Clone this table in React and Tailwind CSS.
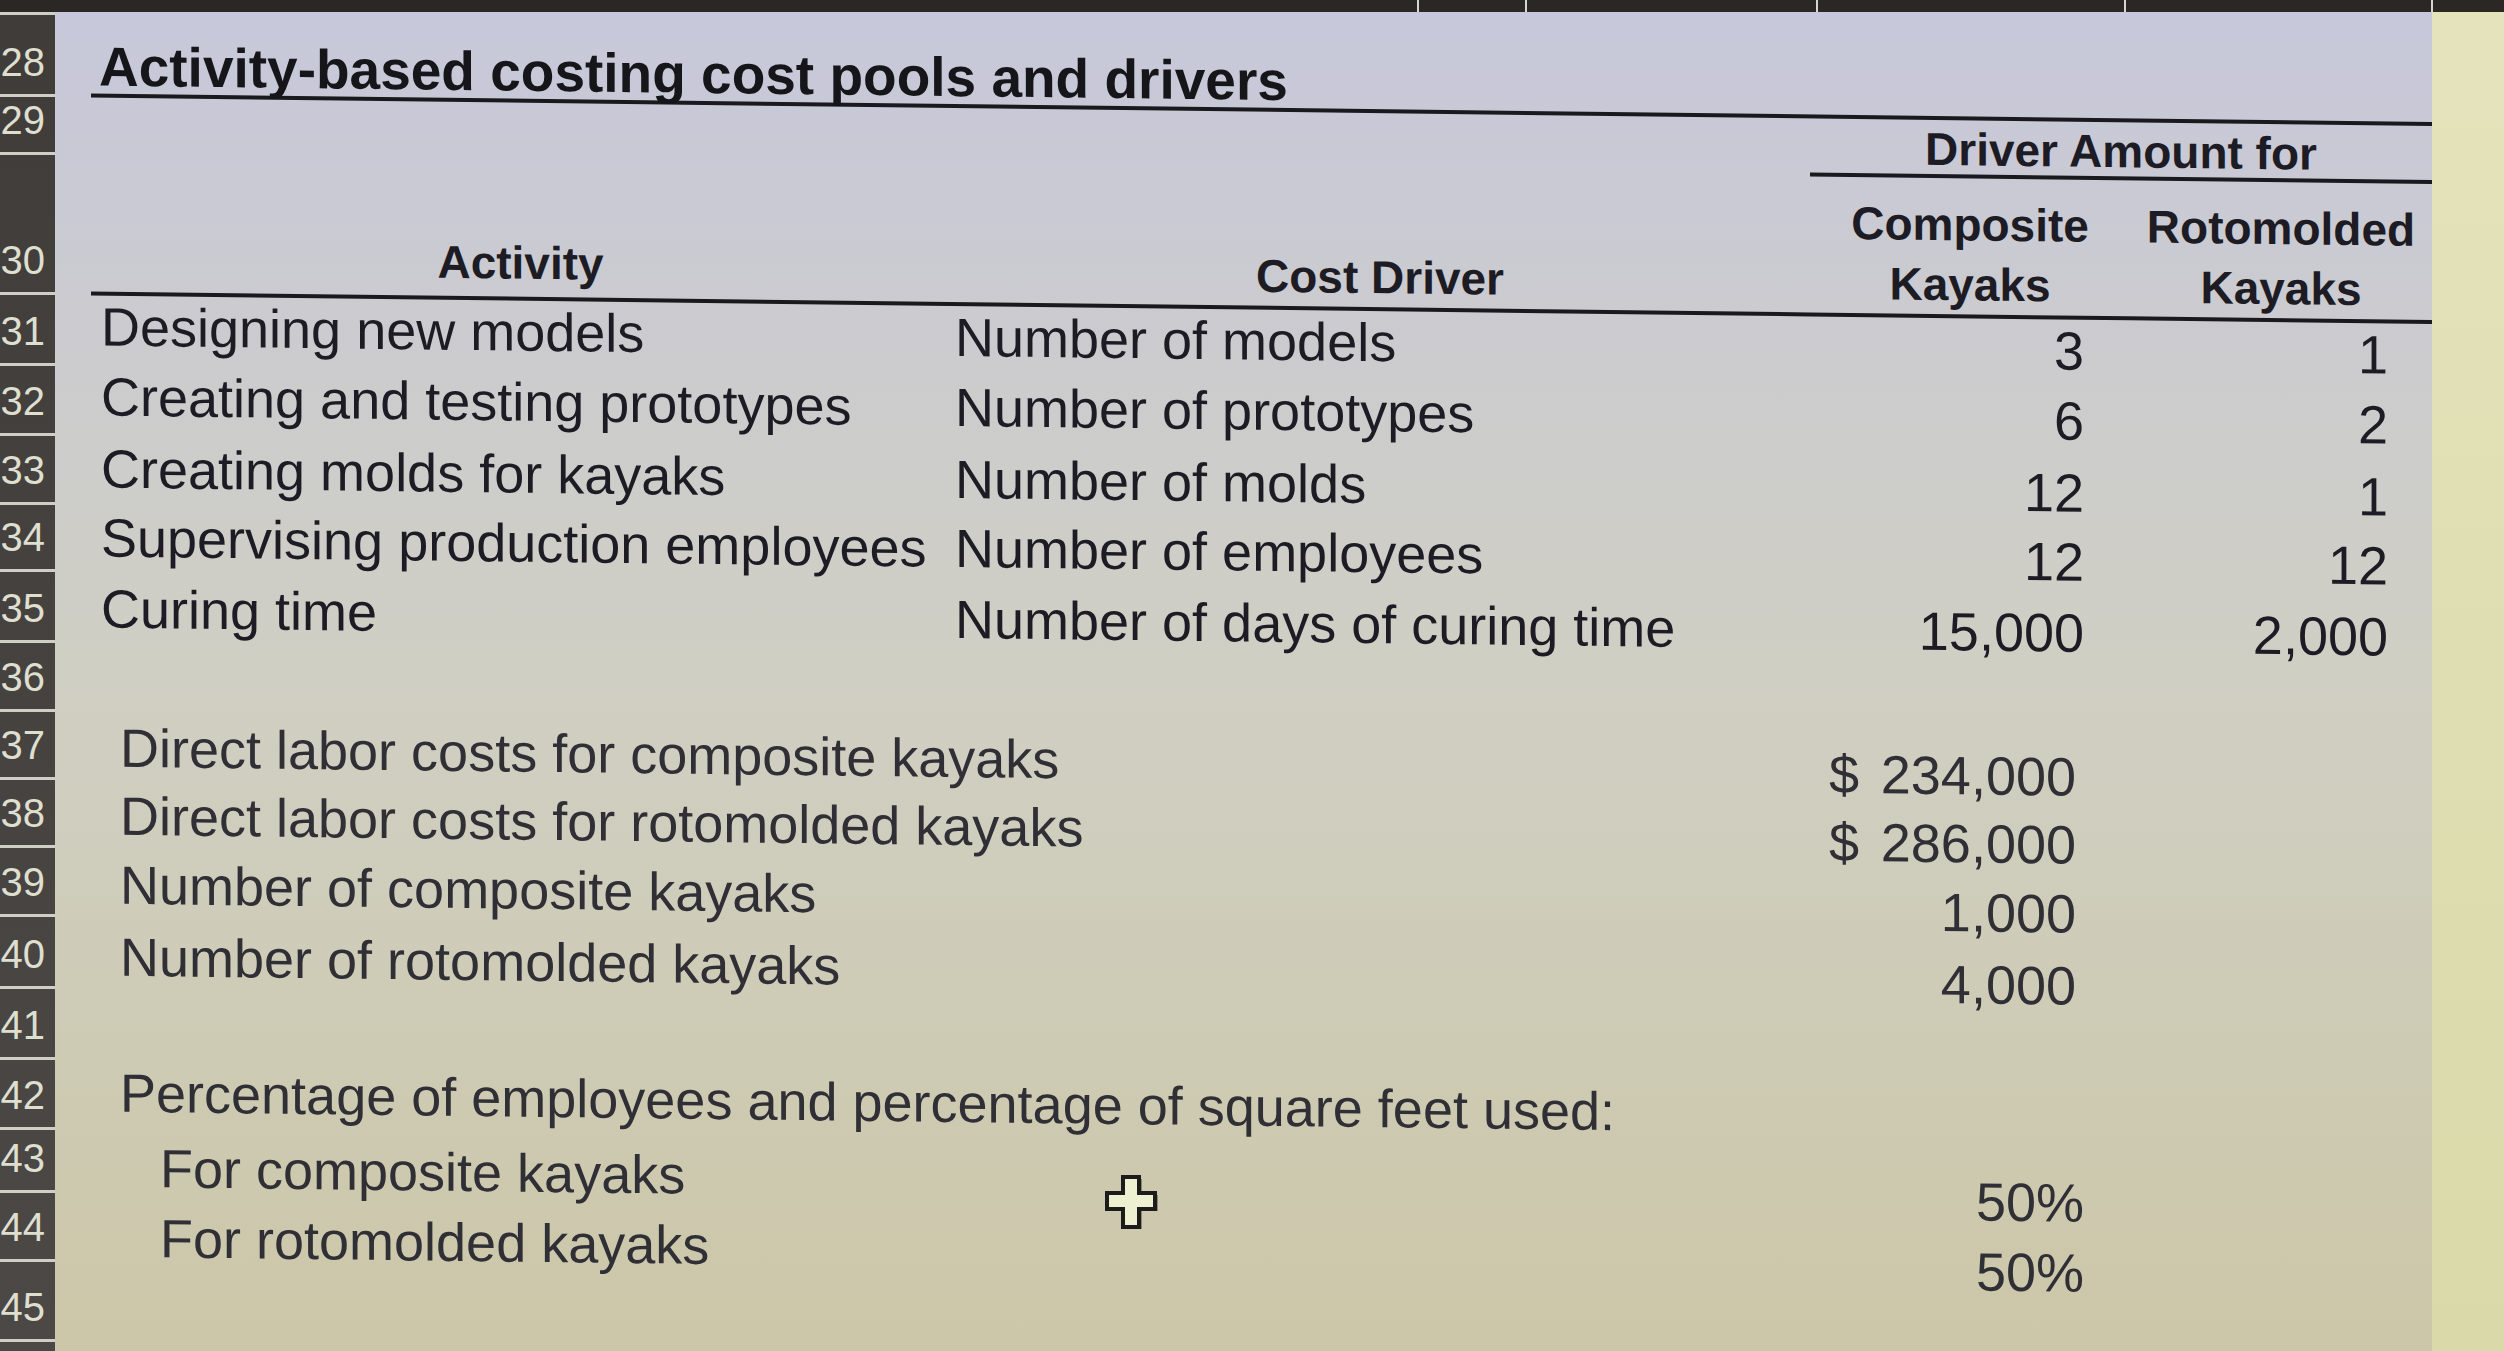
import React from "react";

// row heights shared by the row-number gutter and the sheet
const ROWS = [
  { n: "27", h: "h-[3px]" },
  { n: "28", h: "h-[82px]" },
  { n: "29", h: "h-[58px]" },
  { n: "30", h: "h-[140px]" },
  { n: "31", h: "h-[71px]" },
  { n: "32", h: "h-[70px]" },
  { n: "33", h: "h-[69px]" },
  { n: "34", h: "h-[67px]" },
  { n: "35", h: "h-[71px]" },
  { n: "36", h: "h-[69px]" },
  { n: "37", h: "h-[68px]" },
  { n: "38", h: "h-[68px]" },
  { n: "39", h: "h-[69px]" },
  { n: "40", h: "h-[72px]" },
  { n: "41", h: "h-[71px]" },
  { n: "42", h: "h-[70px]" },
  { n: "43", h: "h-[63px]" },
  { n: "44", h: "h-[69px]" },
  { n: "45", h: "h-[80px]" },
];

const H = Object.fromEntries(ROWS.map((r) => [r.n, r.h]));

const activities = [
  { n: "31", pb: "pb-[10px]", act: "Designing new models", driver: "Number of models", comp: "3", roto: "1" },
  { n: "32", pb: "pb-[10px]", act: "Creating and testing prototypes", driver: "Number of prototypes", comp: "6", roto: "2" },
  { n: "33", pb: "pb-[7px]", act: "Creating molds for kayaks", driver: "Number of molds", comp: "12", roto: "1" },
  { n: "34", pb: "pb-[5px]", act: "Supervising production employees", driver: "Number of employees", comp: "12", roto: "12" },
  { n: "35", pb: "pb-[5px]", act: "Curing time", driver: "Number of days of curing time", comp: "15,000", roto: "2,000" },
];

const labor = [
  { n: "37", label: "Direct labor costs for composite kayaks", cur: true, value: "234,000" },
  { n: "38", label: "Direct labor costs for rotomolded kayaks", cur: true, value: "286,000" },
  { n: "39", label: "Number of composite kayaks", value: "1,000" },
  { n: "40", label: "Number of rotomolded kayaks", value: "4,000" },
];

const Row = ({ h, children }) => (
  <div className={`grid shrink-0 grid-cols-[36px_859px_860px_320px_302px] ${h}`}>{children}</div>
);

const Gutter = () => (
  <div className="flex w-[55px] shrink-0 flex-col overflow-hidden bg-linear-to-b from-[#403c3a] to-[#4c4846]">
    <div className="h-[3px] shrink-0 bg-[#cfcfc5]" />
    {ROWS.slice(1).map((r) => (
      <div
        key={r.n}
        className={`${r.h} flex shrink-0 items-end justify-end border-b-[3px] border-[#cfcfc5] pr-[10px] pb-[12px] text-[40px] leading-none text-[#dedfcf]`}
      >
        {r.n}
      </div>
    ))}
  </div>
);

const Sheet = () => (
  <div className="w-[2377px] shrink-0 overflow-hidden bg-linear-to-b from-[#c7c8da] via-[#d0cfc3] to-[#ccc7a8]">
    <div className="flex origin-top-left skew-y-[0.7deg] flex-col text-[#1d1c24]">
      <div className={H["27"]} />

      <Row h={H["28"]}>
        <div />
        <div className="col-span-4 flex items-end border-b-4 border-[#1a191e] pl-[8px]">
          <span className="text-[55px] leading-[54px] font-bold text-[#161519]">
            Activity-based costing cost pools and drivers
          </span>
        </div>
      </Row>

      <Row h={H["29"]}>
        <div />
        <div />
        <div />
        <div className="col-span-2 flex items-end justify-center border-b-4 border-[#1a191e]">
          <span className="text-[46px] leading-[50px] font-bold">Driver Amount for</span>
        </div>
      </Row>

      <Row h={H["30"]}>
        <div />
        <div className="flex items-end justify-center border-b-4 border-[#1a191e] pb-[4px]">
          <span className="text-[46px] leading-[60px] font-bold">Activity</span>
        </div>
        <div className="flex items-end justify-center border-b-4 border-[#1a191e]">
          <span className="text-[46px] leading-[60px] font-bold">Cost Driver</span>
        </div>
        <div className="flex items-end justify-center border-b-4 border-[#1a191e]">
          <span className="text-center text-[46px] leading-[60px] font-bold">
            Composite
            <br />
            Kayaks
          </span>
        </div>
        <div className="flex items-end justify-center border-b-4 border-[#1a191e]">
          <span className="text-center text-[46px] leading-[60px] font-bold">
            Rotomolded
            <br />
            Kayaks
          </span>
        </div>
      </Row>

      {activities.map((a) => (
        <Row key={a.n} h={H[a.n]}>
          <div />
          <div className={`flex items-end ${a.pb} pl-[10px] text-[54px] leading-[60px] whitespace-nowrap`}>{a.act}</div>
          <div className={`flex items-end ${a.pb} pl-[5px] text-[54px] leading-[60px] whitespace-nowrap`}>{a.driver}</div>
          <div className={`flex items-end justify-end ${a.pb} pr-[46px] text-[54px] leading-[60px]`}>{a.comp}</div>
          <div className={`flex items-end justify-end ${a.pb} pr-[44px] text-[54px] leading-[60px]`}>{a.roto}</div>
        </Row>
      ))}

      <div className={`${H["36"]} shrink-0`} />

      {labor.map((l) => (
        <Row key={l.n} h={H[l.n]}>
          <div />
          <div className="col-span-2 flex items-end pb-[5px] pl-[29px] text-[54px] leading-[56px] whitespace-nowrap text-[#302f35]">
            {l.label}
          </div>
          <div className="flex items-end justify-between pr-[54px] pl-[19px] text-[54px] leading-[56px] text-[#302f35]">
            <span>{l.cur ? "$" : ""}</span>
            <span>{l.value}</span>
          </div>
          <div />
        </Row>
      ))}

      <div className={`${H["41"]} shrink-0`} />

      <Row h={H["42"]}>
        <div />
        <div className="col-span-3 flex items-end pb-[13px] pl-[29px] text-[54px] leading-[50px] whitespace-nowrap text-[#302f35]">
          Percentage of employees and percentage of square feet used:
        </div>
        <div />
      </Row>

      <Row h={H["43"]}>
        <div />
        <div className="col-span-2 flex items-end pb-[3px] pl-[69px] text-[54px] leading-[46px] whitespace-nowrap text-[#302f35]">
          For composite kayaks
        </div>
        <div className="flex items-end justify-end pr-[46px] text-[54px] leading-[30px] text-[#302f35]">50%</div>
        <div />
      </Row>

      <Row h={H["44"]}>
        <div />
        <div className="col-span-2 flex items-end pb-[3px] pl-[69px] text-[54px] leading-[44px] whitespace-nowrap text-[#302f35]">
          For rotomolded kayaks
        </div>
        <div className="flex items-end justify-end pr-[46px] text-[54px] leading-[28px] text-[#302f35]">50%</div>
        <div />
      </Row>
    </div>
  </div>
);

const CellCursor = () => (
  <svg
    className="absolute top-[1175px] left-[1105px]"
    width="56"
    height="58"
    viewBox="0 0 56 58"
  >
    <path
      d="M21 4 H37 V20 H53 V36 H37 V54 H21 V36 H5 V20 H21 Z"
      fill="#4a4536"
      opacity="0.5"
    />
    <path
      d="M18 2 H34 V18 H50 V34 H34 V52 H18 V34 H2 V18 H18 Z"
      fill="#eef0d2"
      stroke="#1d1c1a"
      strokeWidth="4"
      strokeLinejoin="miter"
    />
  </svg>
);

export default function App() {
  return (
    <div className="relative h-[1351px] w-[2504px] overflow-hidden bg-[#c9c8c0] font-['Liberation_Sans',Arial,sans-serif]">
      <div className="flex h-[12px] bg-[#2a2724]">
        <div className="w-[1419px] border-r-2 border-[#d6d6d0]" />
        <div className="w-[108px] border-r-2 border-[#d6d6d0]" />
        <div className="w-[291px] border-r-2 border-[#d6d6d0]" />
        <div className="w-[308px] border-r-2 border-[#d6d6d0]" />
        <div className="w-[307px] border-r-2 border-[#d6d6d0]" />
        <div className="flex-1" />
      </div>
      <div className="flex h-[1339px]">
        <Gutter />
        <Sheet />
        <div className="flex-1 bg-linear-to-b from-[#e5e3bb] to-[#d9d9a9]" />
      </div>
      <CellCursor />
    </div>
  );
}
